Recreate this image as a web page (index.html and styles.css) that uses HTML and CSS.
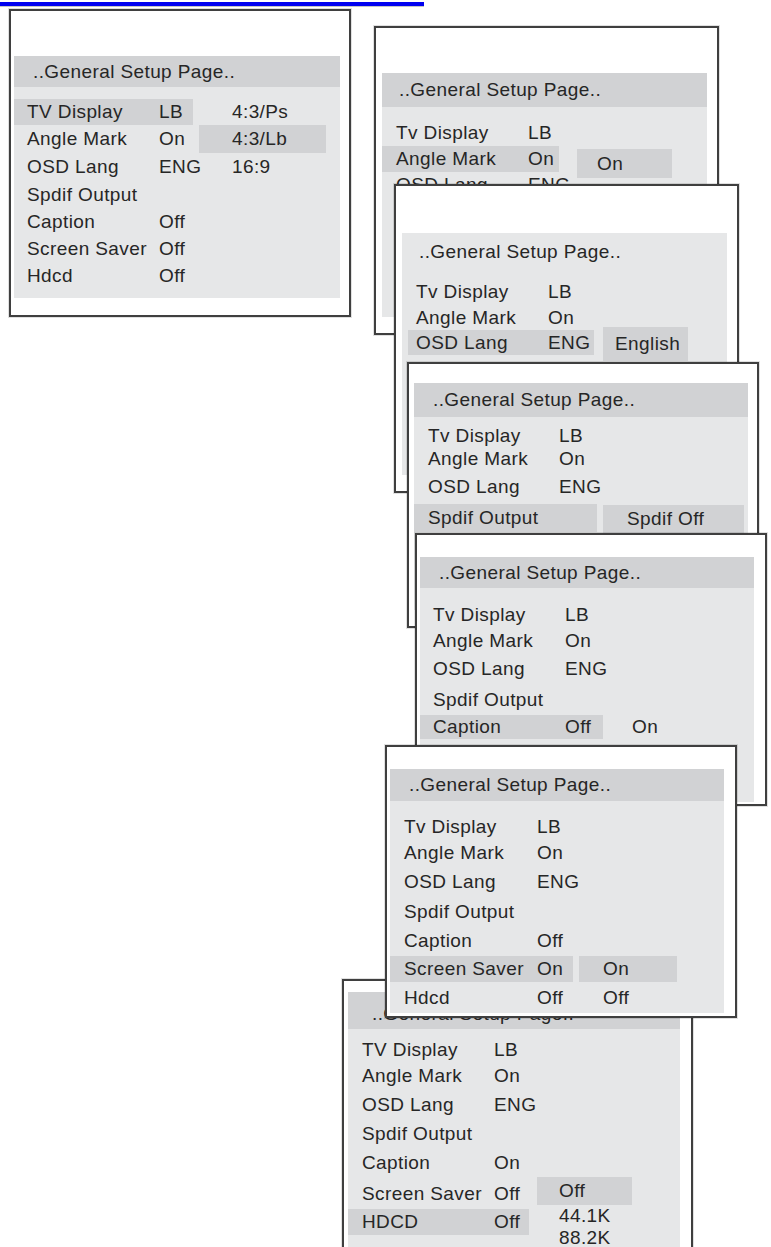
FILE: index.html
```html
<!DOCTYPE html>
<html lang="en">
<head>
<meta charset="utf-8">
<title>General Setup Page</title>
<link rel="stylesheet" href="styles.css">
</head>
<body>
<div class="canvas">
  <div class="title-clip"><div class="title">GENERAL SETUP PAGE</div></div>

  <div class="frame f1">
    <div class="panel">
      <div class="hdr dark">..General Setup Page..</div>
      <div class="rows">
        <div class="row"><div class="sel hl"><span class="lbl">TV Display</span><span class="val">LB</span></div><div class="opt">4:3/Ps</div></div>
        <div class="row"><div class="sel"><span class="lbl">Angle Mark</span><span class="val">On</span></div><div class="opt hl">4:3/Lb</div></div>
        <div class="row"><div class="sel"><span class="lbl">OSD Lang</span><span class="val">ENG</span></div><div class="opt">16:9</div></div>
        <div class="row"><div class="sel"><span class="lbl">Spdif Output</span><span class="val"></span></div></div>
        <div class="row"><div class="sel"><span class="lbl">Caption</span><span class="val">Off</span></div></div>
        <div class="row"><div class="sel"><span class="lbl">Screen Saver</span><span class="val">Off</span></div></div>
        <div class="row"><div class="sel"><span class="lbl">Hdcd</span><span class="val">Off</span></div></div>
      </div>
    </div>
  </div>

  <div class="frame f2">
    <div class="panel">
      <div class="hdr dark">..General Setup Page..</div>
      <div class="rows">
        <div class="row"><div class="sel"><span class="lbl">Tv Display</span><span class="val">LB</span></div></div>
        <div class="row"><div class="sel hl"><span class="lbl">Angle Mark</span><span class="val">On</span></div><div class="opt hl">On</div></div>
        <div class="row"><div class="sel"><span class="lbl">OSD Lang</span><span class="val">ENG</span></div></div>
        <div class="row"><div class="sel"><span class="lbl">Spdif Output</span><span class="val"></span></div></div>
        <div class="row"><div class="sel"><span class="lbl">Caption</span><span class="val">Off</span></div></div>
        <div class="row"><div class="sel"><span class="lbl">Screen Saver</span><span class="val">Off</span></div></div>
        <div class="row"><div class="sel"><span class="lbl">Hdcd</span><span class="val">Off</span></div></div>
      </div>
    </div>
  </div>

  <div class="frame f3">
    <div class="panel">
      <div class="hdr">..General Setup Page..</div>
      <div class="rows">
        <div class="row"><div class="sel"><span class="lbl">Tv Display</span><span class="val">LB</span></div></div>
        <div class="row"><div class="sel"><span class="lbl">Angle Mark</span><span class="val">On</span></div></div>
        <div class="row"><div class="sel hl"><span class="lbl">OSD Lang</span><span class="val">ENG</span></div><div class="opt hl">English</div></div>
        <div class="row"><div class="sel"><span class="lbl">Spdif Output</span><span class="val"></span></div></div>
        <div class="row"><div class="sel"><span class="lbl">Caption</span><span class="val">Off</span></div></div>
        <div class="row"><div class="sel"><span class="lbl">Screen Saver</span><span class="val">Off</span></div></div>
        <div class="row"><div class="sel"><span class="lbl">Hdcd</span><span class="val">Off</span></div></div>
      </div>
    </div>
  </div>

  <div class="frame f4">
    <div class="panel">
      <div class="hdr dark">..General Setup Page..</div>
      <div class="rows">
        <div class="row"><div class="sel"><span class="lbl">Tv Display</span><span class="val">LB</span></div></div>
        <div class="row"><div class="sel"><span class="lbl">Angle Mark</span><span class="val">On</span></div></div>
        <div class="row"><div class="sel"><span class="lbl">OSD Lang</span><span class="val">ENG</span></div></div>
        <div class="row"><div class="sel hl"><span class="lbl">Spdif Output</span><span class="val"></span></div><div class="opt hl">Spdif Off</div></div>
        <div class="row"><div class="sel"><span class="lbl">Caption</span><span class="val">Off</span></div></div>
        <div class="row"><div class="sel"><span class="lbl">Screen Saver</span><span class="val">Off</span></div></div>
        <div class="row"><div class="sel"><span class="lbl">Hdcd</span><span class="val">Off</span></div></div>
      </div>
    </div>
  </div>

  <div class="frame f5">
    <div class="panel">
      <div class="hdr dark">..General Setup Page..</div>
      <div class="rows">
        <div class="row"><div class="sel"><span class="lbl">Tv Display</span><span class="val">LB</span></div></div>
        <div class="row"><div class="sel"><span class="lbl">Angle Mark</span><span class="val">On</span></div></div>
        <div class="row"><div class="sel"><span class="lbl">OSD Lang</span><span class="val">ENG</span></div></div>
        <div class="row"><div class="sel"><span class="lbl">Spdif Output</span><span class="val"></span></div></div>
        <div class="row"><div class="sel hl"><span class="lbl">Caption</span><span class="val">Off</span></div><div class="opt">On</div></div>
        <div class="row"><div class="sel"><span class="lbl">Screen Saver</span><span class="val">Off</span></div></div>
        <div class="row"><div class="sel"><span class="lbl">Hdcd</span><span class="val">Off</span></div></div>
      </div>
    </div>
  </div>

  <div class="frame f7">
    <div class="panel">
      <div class="hdr dark">..General Setup Page..</div>
      <div class="rows">
        <div class="row"><div class="sel"><span class="lbl">TV Display</span><span class="val">LB</span></div></div>
        <div class="row"><div class="sel"><span class="lbl">Angle Mark</span><span class="val">On</span></div></div>
        <div class="row"><div class="sel"><span class="lbl">OSD Lang</span><span class="val">ENG</span></div></div>
        <div class="row"><div class="sel"><span class="lbl">Spdif Output</span><span class="val"></span></div></div>
        <div class="row"><div class="sel"><span class="lbl">Caption</span><span class="val">On</span></div></div>
        <div class="row"><div class="sel"><span class="lbl">Screen Saver</span><span class="val">Off</span></div><div class="opt hl">Off</div></div>
        <div class="row"><div class="sel hl"><span class="lbl">HDCD</span><span class="val">Off</span></div><div class="opt stack"><span>44.1K</span><span>88.2K</span></div></div>
      </div>
    </div>
  </div>

  <div class="frame f6">
    <div class="panel">
      <div class="hdr dark">..General Setup Page..</div>
      <div class="rows">
        <div class="row"><div class="sel"><span class="lbl">Tv Display</span><span class="val">LB</span></div></div>
        <div class="row"><div class="sel"><span class="lbl">Angle Mark</span><span class="val">On</span></div></div>
        <div class="row"><div class="sel"><span class="lbl">OSD Lang</span><span class="val">ENG</span></div></div>
        <div class="row"><div class="sel"><span class="lbl">Spdif Output</span><span class="val"></span></div></div>
        <div class="row"><div class="sel"><span class="lbl">Caption</span><span class="val">Off</span></div></div>
        <div class="row"><div class="sel hl"><span class="lbl">Screen Saver</span><span class="val">On</span></div><div class="opt hl">On</div></div>
        <div class="row"><div class="sel"><span class="lbl">Hdcd</span><span class="val">Off</span></div><div class="opt">Off</div></div>
      </div>
    </div>
  </div>
</div>
</body>
</html>
```

FILE: styles.css
```css
* { box-sizing: border-box; }

html, body {
  margin: 0;
  padding: 0;
  background: #ffffff;
}

body {
  font-family: "Liberation Sans", Arial, sans-serif;
  color: #262626;
}

.canvas {
  position: relative;
  width: 771px;
  height: 1247px;
  overflow: hidden;
}

/* clipped title strip at the very top */
.title-clip {
  height: 7px;
  overflow: hidden;
}

.title {
  width: 424px;
  height: 22px;
  margin-top: -16px;
  padding-left: 6px;
  font-size: 22px;
  font-weight: bold;
  line-height: 18px;
  letter-spacing: 6px;
  white-space: nowrap;
  color: #0000f0;
  border-bottom: 4px solid #0000f0;
  box-shadow: 0 1px 0 #c4c4c4;
}

/* setup windows */
.frame {
  position: absolute;
  border: 2px solid #3f3f3f;
  background: #ffffff;
  box-shadow: 0 0 0 1px rgba(0, 0, 0, 0.12);
}

.panel {
  background: #e6e7e8;
  overflow: hidden;
}

.hdr {
  display: flex;
  align-items: center;
  font-size: 19px;
  letter-spacing: 0.4px;
  white-space: nowrap;
}

.hdr.dark { background: #d1d2d4; }

.rows { display: grid; }

.row {
  display: flex;
  min-height: 0;
  font-size: 19px;
  letter-spacing: 0.4px;
  white-space: nowrap;
}

.sel {
  flex: none;
  display: flex;
  align-items: center;
  width: var(--sw);
  margin-left: var(--sm, 0px);
  padding-left: calc(var(--lx) - var(--sm, 0px));
}

.lbl {
  flex: none;
  width: calc(var(--vx) - var(--lx));
}

.opt {
  flex: none;
  display: flex;
  align-items: center;
  width: var(--ow);
  margin-left: calc(var(--ox) - var(--sw) - var(--sm, 0px));
  padding-left: var(--op);
}

.hl { background: #d1d2d4; }

/* frame 1 */
.f1 { left: 9px; top: 9px; width: 342px; height: 308px; }
.f1 .panel {
  margin: 45px 0 0 3px; width: 326px; height: 242px;
  --lx: 13px; --vx: 145px; --sw: 179px; --ox: 185px; --ow: 127px; --op: 33px;
}
.f1 .hdr { height: 31px; padding-left: 19px; }
.f1 .rows { margin-top: 12px; grid-template-rows: 26px 28px 28px 27px 27px 27px 27px; }

/* frame 2 */
.f2 { left: 374px; top: 26px; width: 345px; height: 309px; }
.f2 .panel {
  margin: 45px 0 0 6px; width: 325px; height: 244px;
  --lx: 14px; --vx: 146px; --sw: 177px; --ox: 195px; --ow: 95px; --op: 20px;
}
.f2 .hdr { height: 34px; padding-left: 17px; }
.f2 .rows { margin-top: 13px; grid-template-rows: 26px 26px 26px 27px 27px 27px 27px; }
.f2 .opt.hl { align-self: flex-start; margin-top: 3px; height: 29px; }

/* frame 3 */
.f3 { left: 394px; top: 184px; width: 345px; height: 309px; }
.f3 .panel {
  margin: 47px 0 0 6px; width: 325px; height: 242px;
  --sm: 6px; --lx: 14px; --vx: 146px; --sw: 186px; --ox: 201px; --ow: 85px; --op: 12px;
}
.f3 .hdr { height: 38px; padding-left: 17px; }
.f3 .rows { margin-top: 8px; grid-template-rows: 26px 25px 25px 27px 27px 27px 27px; }
.f3 .opt.hl { align-self: flex-start; margin-top: -3px; height: 34px; }

/* frame 4 */
.f4 { left: 407px; top: 362px; width: 352px; height: 266px; }
.f4 .panel {
  margin: 19px 0 0 5px; width: 334px; height: 227px;
  --lx: 14px; --vx: 145px; --sw: 183px; --ox: 189px; --ow: 141px; --op: 24px;
}
.f4 .hdr { height: 34px; padding-left: 19px; }
.f4 .rows { margin-top: 7px; grid-template-rows: 24px 22px 34px 28px 26px 26px 26px; }
.f4 .opt.hl { align-self: flex-start; margin-top: 1px; height: 28px; }

/* frame 5 */
.f5 { left: 415px; top: 533px; width: 352px; height: 273px; }
.f5 .panel {
  margin: 22px 0 0 3px; width: 334px; height: 245px;
  --lx: 13px; --vx: 145px; --sw: 183px; --ox: 212px; --ow: 95px; --op: 0px;
}
.f5 .hdr { height: 31px; padding-left: 19px; }
.f5 .rows { margin-top: 13px; grid-template-rows: 28px 24px 32px 30px 24px 28px 28px; }

/* frame 6 */
.f6 { left: 385px; top: 745px; width: 352px; height: 273px; }
.f6 .panel {
  margin: 22px 0 0 3px; width: 334px; height: 244px;
  --lx: 14px; --vx: 147px; --sw: 183px; --ox: 189px; --ow: 98px; --op: 24px;
}
.f6 .hdr { height: 32px; padding-left: 19px; }
.f6 .rows { margin-top: 13px; grid-template-rows: 26px 26px 32px 28px 30px 26px 31px; }

/* frame 7 (beneath frame 6) */
.f7 { left: 342px; top: 979px; width: 351px; height: 300px; }
.f7 .panel {
  margin: 11px 0 0 4px; width: 332px; height: 280px;
  --lx: 14px; --vx: 146px; --sw: 181px; --ox: 189px; --ow: 95px; --op: 22px;
}
.f7 .hdr { height: 37px; padding: 7px 0 0 24px; }
.f7 .rows { margin-top: 8px; grid-template-rows: 26px 26px 31px 27px 31px 31px 26px; }
.f7 .opt.hl { align-self: flex-start; margin-top: -1px; height: 28px; }
.f7 .opt.stack {
  align-self: flex-start;
  flex-direction: column;
  align-items: flex-start;
  margin-top: -4px;
  line-height: 22px;
}
```
